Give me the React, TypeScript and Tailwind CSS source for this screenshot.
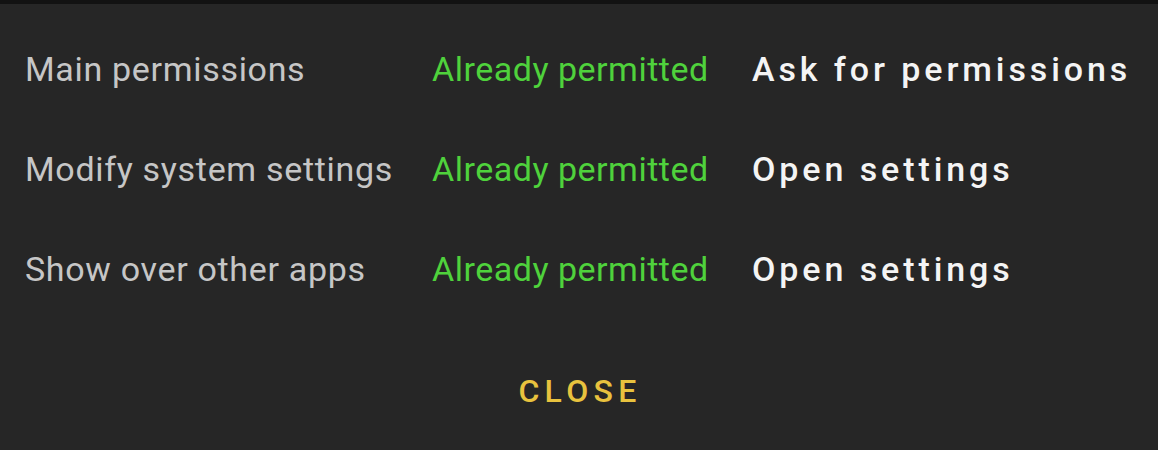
import React from "react";

const rows = [
  { label: "Main permissions", action: "Ask for permissions" },
  { label: "Modify system settings", action: "Open settings" },
  { label: "Show over other apps", action: "Open settings" },
];

export default function App() {
  return (
    <div className="w-[1158px] h-[450px] bg-[#262626] overflow-hidden flex flex-col" style={{ fontFamily: "Roboto, 'Noto Sans', sans-serif" }}>
      <div className="h-[4px] bg-[#121212] shrink-0" />
      <div className="pt-[15px] pl-[25px] grid grid-cols-[407px_320px_1fr]">
        {rows.map((r) => (
          <React.Fragment key={r.label}>
            <div className="text-[34px] leading-[100px] text-[#c6c6c6] whitespace-nowrap tracking-[0.02em]">{r.label}</div>
            <div className="text-[34px] leading-[100px] text-[#4fd23c] whitespace-nowrap tracking-[0.015em]">Already permitted</div>
            <div className="text-[34px] leading-[100px] text-[#f4f4f4] font-medium tracking-[0.115em] whitespace-nowrap">{r.action}</div>
          </React.Fragment>
        ))}
      </div>
      <div className="mt-[47px] flex justify-center">
        <div className="text-[32px] leading-[50px] text-[#e8c23e] font-medium tracking-[0.165em] pl-[0.06em]">CLOSE</div>
      </div>
    </div>
  );
}
